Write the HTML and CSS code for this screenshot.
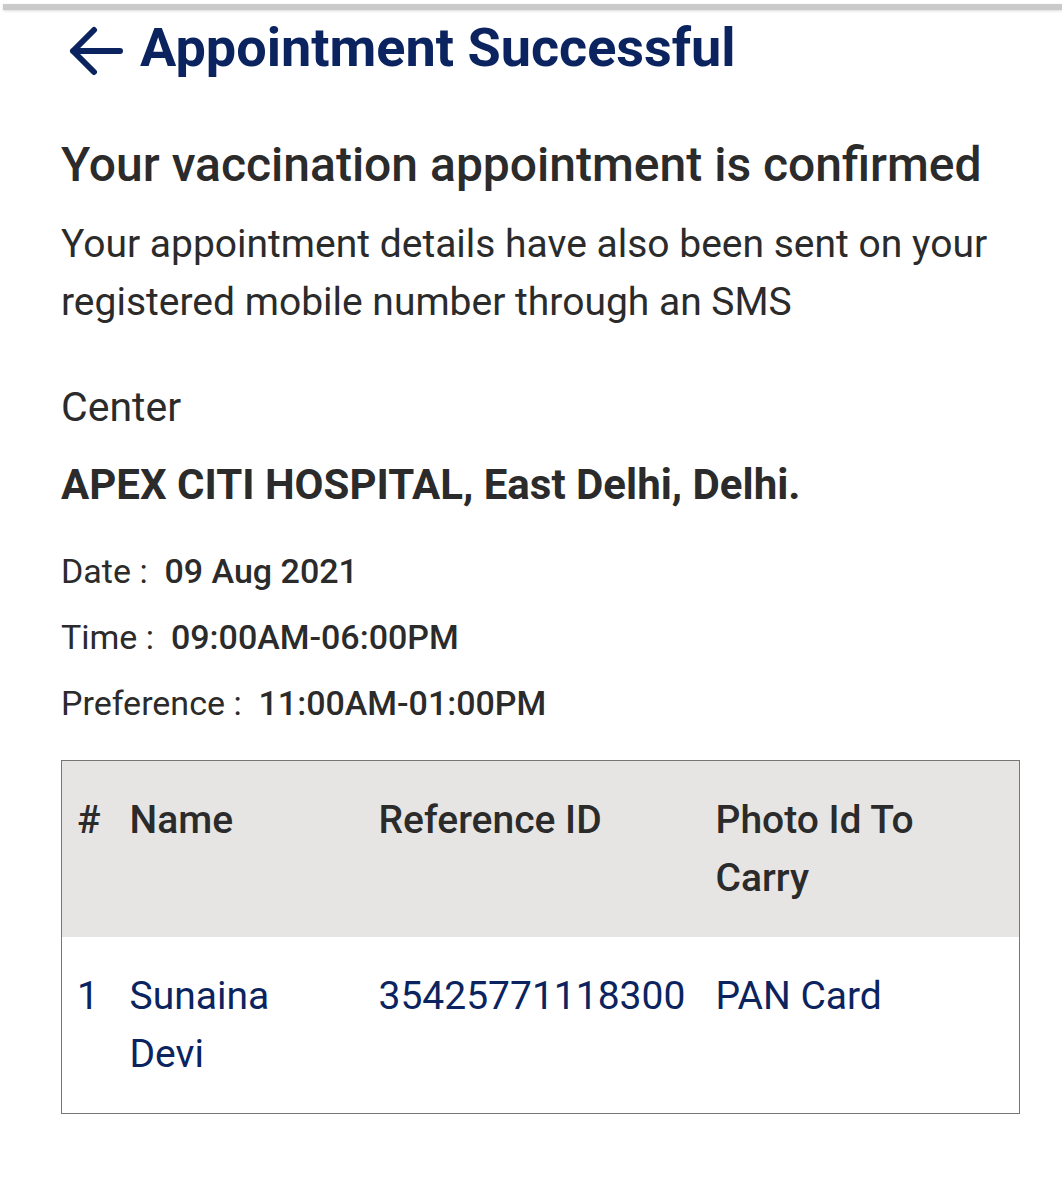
FILE: index.html
```html
<!DOCTYPE html>
<html>
<head>
<meta charset="utf-8">
<link rel="stylesheet" href="styles.css">
</head>
<body>
<div class="topbar"></div>
<header class="header">
  <svg class="back" width="56" height="50" viewBox="0 0 56 50">
    <path d="M26 4 L5 25 L26 46 M5 25 H52" fill="none" stroke="#0b2460" stroke-width="6" stroke-linecap="round" stroke-linejoin="round"/>
  </svg>
  <h1 class="title">Appointment Successful</h1>
</header>
<main class="content">
  <h2 class="heading">Your vaccination appointment is confirmed</h2>
  <p class="intro">Your appointment details have also been sent on your registered mobile number through an SMS</p>
  <div class="label">Center</div>
  <div class="center-name">APEX CITI HOSPITAL, East Delhi, Delhi.</div>
  <div class="infos">
    <div class="info">Date :&nbsp; <b>09 Aug 2021</b></div>
    <div class="info">Time :&nbsp; <b>09:00AM-06:00PM</b></div>
    <div class="info">Preference :&nbsp; <b>11:00AM-01:00PM</b></div>
  </div>
  <table class="tbl">
    <colgroup>
      <col class="c1"><col class="c2"><col class="c3"><col class="c4">
    </colgroup>
    <thead>
      <tr><th>#</th><th>Name</th><th>Reference ID</th><th>Photo Id To Carry</th></tr>
    </thead>
    <tbody>
      <tr><td>1</td><td>Sunaina Devi</td><td class="nowrap">35425771118300</td><td>PAN Card</td></tr>
    </tbody>
  </table>
</main>
</body>
</html>
```
FILE: styles.css
```css
body {
  margin: 0;
  background: #fff;
  font-family: Roboto, "Noto Sans", sans-serif;
  color: #2b2b2b;
}
.topbar {
  margin: 4px 0 0 3px;
  height: 6px;
  background: #cacaca;
  box-shadow: 0 1px 3px rgba(0,0,0,0.15);
}
.header {
  display: flex;
  align-items: flex-start;
  padding: 6px 0 0 68px;
  height: 64px;
}
.back {
  flex: none;
  margin: 10px 16px 0 0;
}
.title {
  margin: 0;
  font-size: 54px;
  line-height: 64px;
  font-weight: 700;
  color: #0b2460;
}
.content {
  padding: 0 43px 0 61px;
}
.heading {
  margin: 55px 0 0;
  font-size: 48px;
  font-weight: 500;
  line-height: 60px;
}
.intro {
  margin: 20px 0 0;
  font-size: 39px;
  line-height: 58px;
}
.label {
  margin-top: 47px;
  font-size: 41px;
  line-height: 58px;
}
.center-name {
  margin-top: 19px;
  font-size: 42px;
  font-weight: 700;
  line-height: 60px;
}
.infos {
  margin-top: 23px;
}
.info {
  font-size: 34px;
  line-height: 66px;
}
.info b { font-weight: 500; }
.tbl {
  margin-top: 24px;
  width: 959px;
  table-layout: fixed;
  border-collapse: collapse;
  border: 1.5px solid #767676;
  font-size: 39px;
  line-height: 58px;
}
.tbl th {
  background: #e6e5e3;
  font-weight: 500;
  text-align: left;
  vertical-align: top;
  padding: 30px 16px 30px 15px;
}
.tbl td {
  color: #0b2460;
  vertical-align: top;
  padding: 30px 16px 30px 15px;
}
.nowrap { white-space: nowrap; }
.c1 { width: 53px; }
.c2 { width: 249px; }
.c3 { width: 337px; }
```
